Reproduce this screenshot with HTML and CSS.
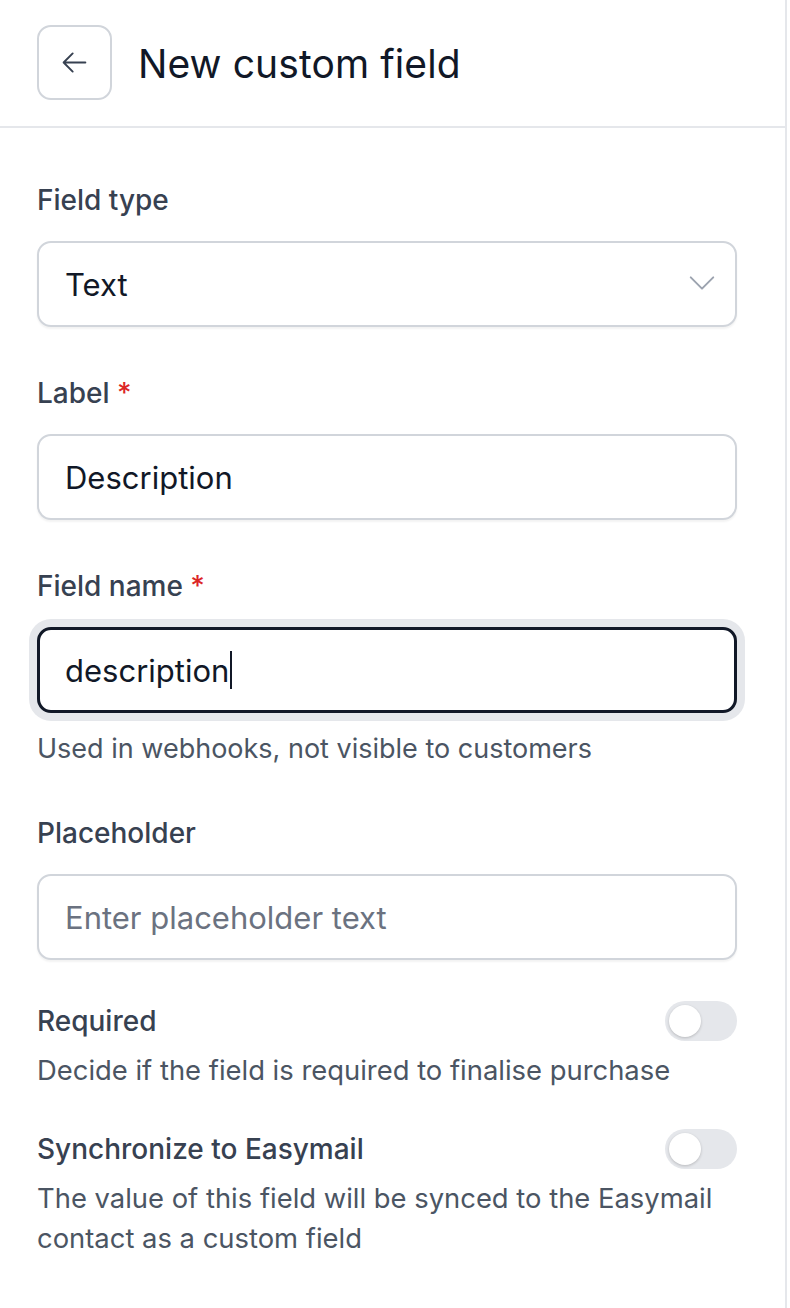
FILE: index.html
```html
<!DOCTYPE html>
<html lang="en">
<head>
  <meta charset="UTF-8">
  <meta name="viewport" content="width=device-width, initial-scale=1.0">
  <title>New custom field</title>
  <link rel="stylesheet" href="styles.css">
</head>
<body>
  <div class="panel">
    <div class="header">
      <button class="back-button" type="button">
        <svg width="29" height="29" viewBox="0 0 24 24" fill="none" stroke="currentColor" stroke-width="1.6" stroke-linecap="round" stroke-linejoin="round">
          <path d="M10.5 19.5 3 12m0 0 7.5-7.5M3 12h18"/>
        </svg>
      </button>
      <h1>New custom field</h1>
    </div>

    <div class="form">
      <div class="field">
        <label for="fieldType">Field type</label>
        <div class="select-wrap">
          <select id="fieldType" class="control">
            <option>Text</option>
            <option>Number</option>
            <option>Checkbox</option>
          </select>
          <svg class="chevron" width="36" height="36" viewBox="0 0 24 24" fill="none" stroke="currentColor" stroke-width="1.3" stroke-linecap="round" stroke-linejoin="round">
            <path d="m19.5 8.25-7.5 7.5-7.5-7.5"/>
          </svg>
        </div>
      </div>

      <div class="field">
        <label for="labelInput">Label <span class="req">*</span></label>
        <input id="labelInput" class="control" type="text" value="Description">
      </div>

      <div class="field">
        <label>Field name <span class="req">*</span></label>
        <div class="control focused">description<span class="caret"></span></div>
        <p class="help">Used in webhooks, not visible to customers</p>
      </div>

      <div class="field">
        <label for="placeholderInput">Placeholder</label>
        <input id="placeholderInput" class="control" type="text" placeholder="Enter placeholder text">
      </div>

      <div class="toggle-item">
        <div class="toggle-row">
          <span class="toggle-label">Required</span>
          <span class="toggle"><span class="knob"></span></span>
        </div>
        <p class="toggle-desc">Decide if the field is required to finalise purchase</p>
      </div>

      <div class="toggle-item">
        <div class="toggle-row">
          <span class="toggle-label">Synchronize to Easymail</span>
          <span class="toggle"><span class="knob"></span></span>
        </div>
        <p class="toggle-desc">The value of this field will be synced to the Easymail contact as a custom field</p>
      </div>
    </div>
  </div>
</body>
</html>
```

FILE: styles.css
```css
body {
  margin: 0;
  font-family: Inter, "Noto Sans", sans-serif;
  background: #fff;
  color: #111827;
}
.panel {
  width: 787px;
  min-height: 1308px;
  border-right: 2px solid #e5e7eb;
  box-sizing: border-box;
}
.header {
  display: flex;
  align-items: center;
  gap: 26px;
  height: 126px;
  padding: 0 37px;
  border-bottom: 2px solid #e5e7eb;
}
.back-button {
  width: 75px;
  height: 75px;
  display: flex;
  align-items: center;
  justify-content: center;
  background: #fff;
  border: 2px solid #d1d5db;
  border-radius: 14px;
  color: #374151;
  padding: 0;
  margin-top: -1px;
}
h1 {
  margin: 0;
  font-size: 39px;
  font-weight: 400;
  color: #111827;
  letter-spacing: 0.1px;
}
.form {
  width: 700px;
  padding: 56px 0 0 37px;
}
.field {
  margin-bottom: 50px;
}
label {
  display: block;
  font-size: 28px;
  line-height: 32px;
  font-weight: 500;
  color: #374151;
  margin-bottom: 25px;
}
.req {
  color: #dc2626;
}
.control {
  display: block;
  width: 100%;
  height: 86px;
  box-sizing: border-box;
  padding: 0 26px;
  font-family: inherit;
  font-size: 31px;
  color: #111827;
  background: #fff;
  border: 2px solid #d1d5db;
  border-radius: 14px;
  box-shadow: 0 2px 2px rgba(0, 0, 0, 0.05);
  outline: none;
}
.control::placeholder {
  color: #6b7280;
}
.select-wrap {
  position: relative;
}
select.control {
  appearance: none;
}
.chevron {
  position: absolute;
  right: 17px;
  top: 24px;
  color: #9ca3af;
  pointer-events: none;
}
.focused {
  display: flex;
  align-items: center;
  border: 3px solid #111827;
  padding-left: 25px;
  box-shadow: 0 0 0 8px #e5e7eb;
}
.caret {
  display: inline-block;
  width: 2px;
  height: 38px;
  background: #111827;
  margin-left: 1px;
}
.help {
  margin: 20px 0 0;
  font-size: 27px;
  line-height: 32px;
  color: #4b5563;
}
.field:has(.help) {
  margin-bottom: 52px;
}
.toggle-item {
  margin-top: -9px;
  margin-bottom: 48px;
}
.toggle-row {
  display: flex;
  align-items: center;
  justify-content: space-between;
  height: 40px;
}
.toggle-label {
  font-size: 28px;
  font-weight: 500;
  color: #374151;
}
.toggle {
  width: 72px;
  height: 40px;
  border-radius: 20px;
  background: #e5e7eb;
  display: flex;
  align-items: center;
  padding: 0 4px;
  box-sizing: border-box;
}
.knob {
  width: 32px;
  height: 32px;
  border-radius: 50%;
  background: #fff;
  box-shadow: 0 1px 3px rgba(0, 0, 0, 0.2);
}
.toggle-desc {
  margin: 9px 0 0;
  font-size: 27.4px;
  line-height: 40px;
  color: #4b5563;
}
```
